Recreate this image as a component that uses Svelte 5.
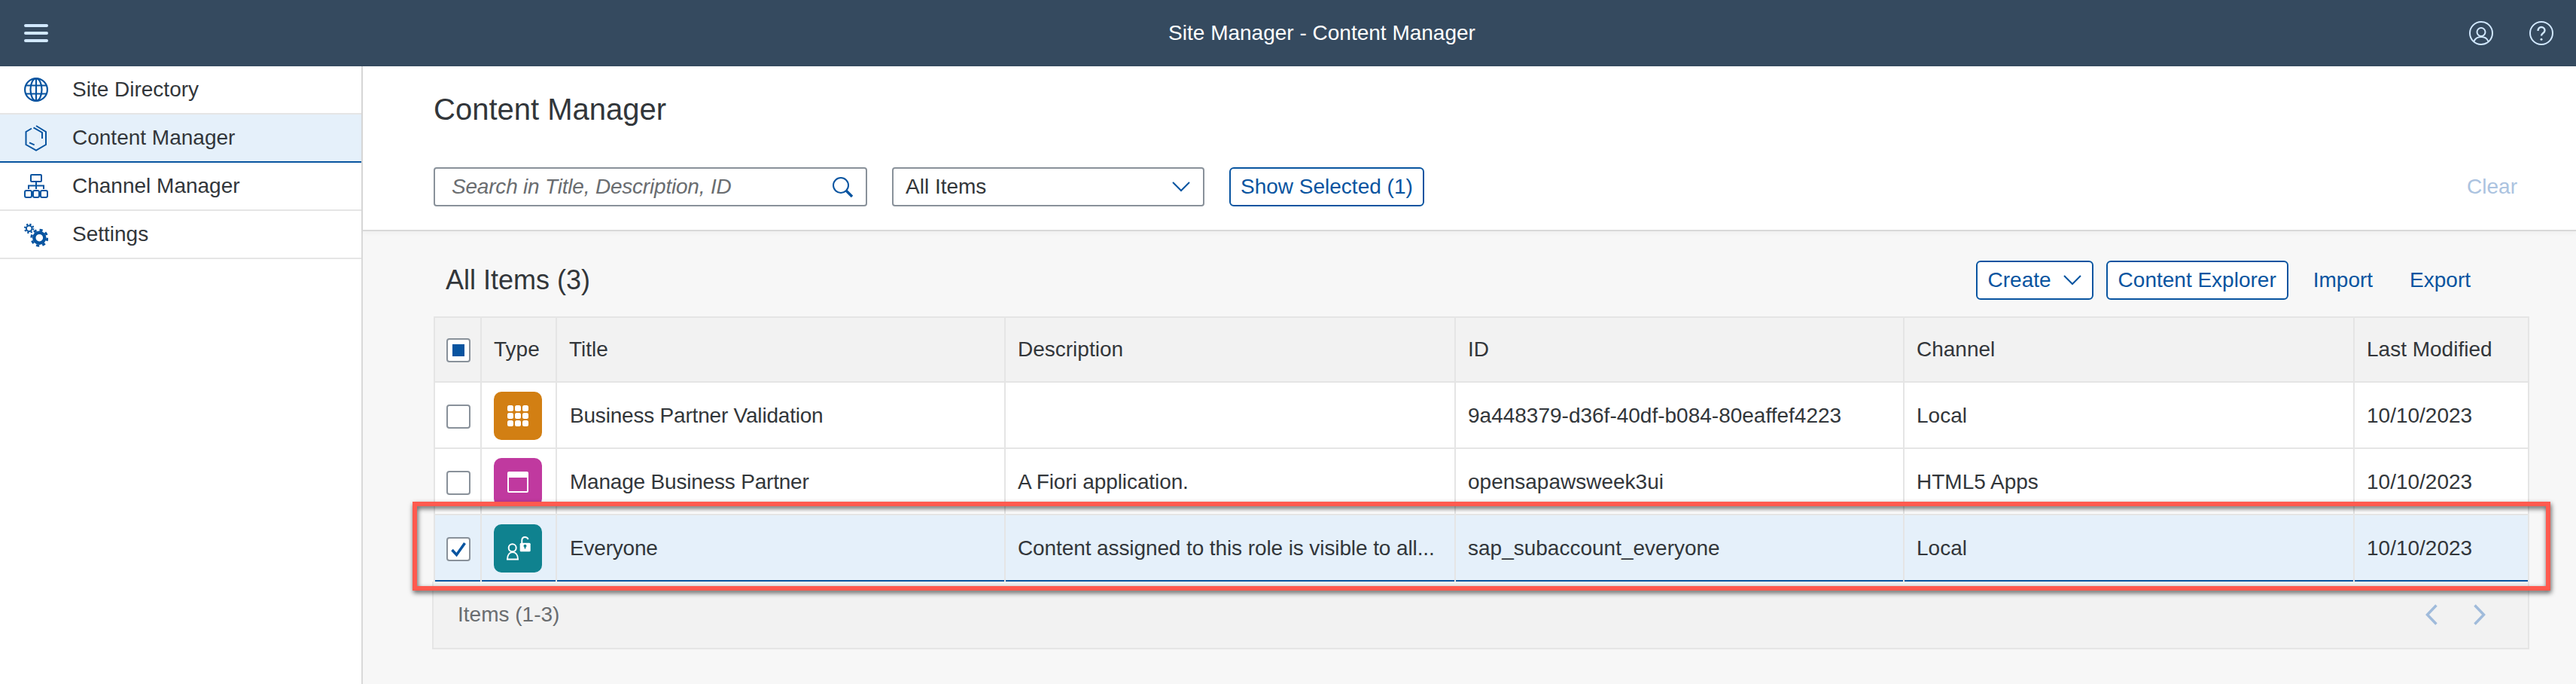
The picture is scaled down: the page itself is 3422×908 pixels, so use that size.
<script>
  const sideItems = [
    { key: "globe", label: "Site Directory" },
    { key: "box", label: "Content Manager", active: true },
    { key: "tree", label: "Channel Manager" },
    { key: "gears", label: "Settings" },
  ];

  const columns = ["Type", "Title", "Description", "ID", "Channel", "Last Modified"];

  const rows = [
    {
      icon: "grid",
      title: "Business Partner Validation",
      description: "",
      id: "9a448379-d36f-40df-b084-80eaffef4223",
      channel: "Local",
      modified: "10/10/2023",
    },
    {
      icon: "window",
      title: "Manage Business Partner",
      description: "A Fiori application.",
      id: "opensapawsweek3ui",
      channel: "HTML5 Apps",
      modified: "10/10/2023",
    },
    {
      icon: "role",
      title: "Everyone",
      description: "Content assigned to this role is visible to all...",
      id: "sap_subaccount_everyone",
      channel: "Local",
      modified: "10/10/2023",
      selected: true,
    },
  ];
</script>

<div class="shell">
  <header class="topbar">
    <button class="hamburger" aria-label="Menu">
      <span></span><span></span><span></span>
    </button>
    <div class="app-title">Site Manager - Content Manager</div>
    <div class="top-actions">
      <svg width="32" height="32" viewBox="0 0 32 32" fill="none" stroke="#d1e8ff" stroke-width="2">
        <circle cx="16" cy="16" r="15" />
        <circle cx="16" cy="14.5" r="5.5" />
        <path d="M6.5 27c1.5-4 5-6 9.500-6s8 2 9.500 6" />
      </svg>
      <svg width="32" height="32" viewBox="0 0 32 32" fill="none" stroke="#d1e8ff" stroke-width="2">
        <circle cx="16" cy="16" r="15" />
        <path d="M11.5 13c0-3 2-5 4.500-5s4.500 2 4.500 4.500c0 3.500-4.500 3.500-4.500 7" stroke-width="2.400" />
        <circle cx="16" cy="24.300" r="1.500" fill="#d1e8ff" stroke="none" />
      </svg>
    </div>
  </header>

  <div class="body">
    <nav class="sidebar">
      {#each sideItems as item}
        <div class="side-item" class:active={item.active}>
          <span class="side-icon">
            {#if item.key === "globe"}
              <svg width="32" height="36" viewBox="0 0 32 36" fill="none" stroke="#0854a0" stroke-width="2.200">
                <circle cx="16" cy="18" r="14.900" />
                <ellipse cx="16" cy="18" rx="7.500" ry="14.900" />
                <path d="M16 3v30M2.500 12.500h27M2.500 23.500h27" />
              </svg>
            {:else if item.key === "box"}
              <svg width="32" height="36" viewBox="0 0 32 36" fill="none" stroke="#0854a0" stroke-width="2">
                <path d="M10 5.500 2.500 10v17L16 34.500 29 27V10L16 2" />
                <path d="M12.500 4.300 24 11v8M7 24.300l6.700 3" />
              </svg>
            {:else if item.key === "tree"}
              <svg width="32" height="32" viewBox="0 0 32 32" fill="none" stroke="#0854a0" stroke-width="2">
                <rect x="9" y="1" width="14" height="9" rx="1" />
                <path d="M16 10v10M6 20v-4.500h20V20" />
                <rect x="1" y="22" width="9" height="9" rx="2" />
                <rect x="12" y="22" width="8" height="9" rx="2" />
                <rect x="22" y="22" width="9" height="9" rx="2" />
              </svg>
            {:else}
              <svg width="32" height="36" viewBox="0 0 32 36" fill="none" stroke="#0854a0">
                <circle cx="6.700" cy="10.300" r="3.800" stroke-width="2" />
                <circle cx="6.700" cy="10.300" r="5.700" stroke-width="2" stroke-dasharray="2.240 2.240" />
                <circle cx="20.300" cy="22.700" r="7" stroke-width="4.400" />
                <circle cx="20.300" cy="22.700" r="10.500" stroke-width="3" stroke-dasharray="4.120 4.120" />
              </svg>
            {/if}
          </span>
          <span class="side-label">{item.label}</span>
        </div>
      {/each}
    </nav>

    <main class="main">
      <section class="filterbar">
        <h1>Content Manager</h1>
        <div class="filters">
          <div class="search">
            <span class="placeholder">Search in Title, Description, ID</span>
            <svg width="28" height="28" viewBox="0 0 28 28" fill="none" stroke="#0854a0" stroke-width="2">
              <circle cx="12" cy="12" r="10" />
              <path d="M19 19l8 8" stroke-width="3.500" />
            </svg>
          </div>
          <div class="select">
            <span>All Items</span>
            <svg class="chev" width="24" height="14" viewBox="0 0 24 14" fill="none" stroke="#0854a0" stroke-width="2">
              <path d="M1 1l11 11L23 1" />
            </svg>
          </div>
          <button class="btn show-selected">Show Selected (1)</button>
          <button class="link clear">Clear</button>
        </div>
      </section>

      <section class="content">
        <div class="toolbar">
          <h2>All Items (3)</h2>
          <div class="tools">
            <button class="btn create">
              Create
              <svg class="chev" width="24" height="14" viewBox="0 0 24 14" fill="none" stroke="#0854a0" stroke-width="2">
                <path d="M1 1l11 11L23 1" />
              </svg>
            </button>
            <button class="btn">Content Explorer</button>
            <button class="link import">Import</button>
            <button class="link export">Export</button>
          </div>
        </div>

        <div class="table-wrap">
          <table>
            <colgroup>
              <col style="width: 62px" />
              <col style="width: 100px" />
              <col style="width: 596px" />
              <col style="width: 598px" />
              <col style="width: 596px" />
              <col style="width: 598px" />
              <col style="width: 232px" />
            </colgroup>
            <thead>
              <tr>
                <th class="check-cell">
                  <span class="checkbox"><span class="partial"></span></span>
                </th>
                {#each columns as col}
                  <th>{col}</th>
                {/each}
              </tr>
            </thead>
            <tbody>
              {#each rows as row}
                <tr class:selected={row.selected}>
                  <td class="check-cell">
                    <span class="checkbox">
                      {#if row.selected}
                        <svg width="24" height="24" viewBox="0 0 24 24" fill="none" stroke="#0854a0" stroke-width="3.500">
                          <path d="M3.500 13l6 6.500L20.500 4" />
                        </svg>
                      {/if}
                    </span>
                  </td>
                  <td class="type-cell">
                    <span class="type-icon {row.icon}">
                      {#if row.icon === "grid"}
                        <svg width="28" height="28" viewBox="0 0 28 28" fill="#fff">
                          {#each [0, 10, 20] as y}
                            {#each [0, 10, 20] as x}
                              <rect x={x} y={y} width="8" height="8" rx="2.500" />
                            {/each}
                          {/each}
                        </svg>
                      {:else if row.icon === "window"}
                        <svg width="28" height="28" viewBox="0 0 28 28" fill="none">
                          <rect x="1" y="1" width="26" height="26" rx="1" stroke="#fff" stroke-width="2" />
                          <rect x="1" y="1" width="26" height="7" fill="#fff" />
                        </svg>
                      {:else}
                        <svg width="33" height="32" viewBox="0 0 33 32" fill="none" stroke="#fff" stroke-width="2">
                          <circle cx="8.700" cy="15.300" r="5" />
                          <path d="M2 30.500c0-6 3-9.500 7-9.500s7 3.500 7 9.500z" />
                          <path d="M21.300 9.500V5.500c0-3 1.700-4.500 4-4.500s3.700 1 4.300 3" />
                          <rect x="18.700" y="8.700" width="14" height="11.600" rx="1.500" fill="#fff" stroke="none" />
                          <circle cx="25.500" cy="12.700" r="2" fill="#0f828f" stroke="none" />
                          <rect x="24.700" y="13" width="1.600" height="3.500" fill="#0f828f" stroke="none" />
                        </svg>
                      {/if}
                    </span>
                  </td>
                  <td class="title-cell">{row.title}</td>
                  <td class="desc-cell">{row.description}</td>
                  <td>{row.id}</td>
                  <td>{row.channel}</td>
                  <td>{row.modified}</td>
                </tr>
              {/each}
            </tbody>
          </table>
        </div>

        <div class="table-footer">
          <span>Items (1-3)</span>
          <div class="pager">
            <svg width="16" height="28" viewBox="0 0 16 28" fill="none" stroke="#a0bbdb" stroke-width="3.500">
              <path d="M14.500 1.500 2.500 14l12 12.500" />
            </svg>
            <svg width="16" height="28" viewBox="0 0 16 28" fill="none" stroke="#a0bbdb" stroke-width="3.500">
              <path d="M1.500 1.500 13.500 14l-12 12.500" />
            </svg>
          </div>
        </div>
        <div class="callout"></div>
      </section>
    </main>
  </div>
</div>

<style>
  :global(body) {
    margin: 0;
    background: #f7f7f7;
    font-family: "Liberation Sans", Arial, sans-serif;
    color: #32363a;
  }
  button {
    font-family: inherit;
    margin: 0;
    background: none;
    cursor: pointer;
  }
  .shell {
    width: 3422px;
    height: 908px;
    overflow: hidden;
    display: flex;
    flex-direction: column;
    font-size: 28px;
  }
  .topbar {
    height: 88px;
    flex: none;
    background: #354a5f;
    display: grid;
    grid-template-columns: 1fr auto 1fr;
    align-items: center;
    padding: 0 30px 0 32px;
  }
  .hamburger {
    border: 0;
    padding: 0;
    width: 32px;
    height: 24px;
    display: flex;
    flex-direction: column;
    justify-content: space-between;
  }
  .hamburger span {
    height: 4px;
    width: 100%;
    background: #d1e8ff;
    border-radius: 2px;
  }
  .app-title {
    color: #fff;
    margin-left: 88px;
  }
  .top-actions {
    display: flex;
    justify-content: flex-end;
    gap: 48px;
  }
  .body {
    flex: 1;
    display: flex;
    min-height: 0;
  }
  .sidebar {
    width: 480px;
    flex: none;
    background: #fff;
    border-right: 2px solid #d9d9d9;
  }
  .side-item {
    height: 62px;
    display: flex;
    align-items: center;
    padding-left: 32px;
    border-bottom: 2px solid #e5e5e5;
  }
  .side-item.active {
    background: #e5f0fa;
    border-bottom-color: #0854a0;
  }
  .side-icon {
    width: 32px;
    height: 36px;
    display: flex;
    align-items: center;
    margin-right: 32px;
  }
  .main {
    flex: 1;
    min-width: 0;
    display: flex;
    flex-direction: column;
  }
  .filterbar {
    height: 219px;
    flex: none;
    box-sizing: border-box;
    background: #fff;
    border-bottom: 2px solid #d9d9d9;
    box-shadow: 0 2px 6px rgba(0, 0, 0, 0.04);
    padding: 34px 78px 0 94px;
  }
  h1 {
    margin: 0 0 54px;
    font-size: 40px;
    font-weight: 400;
    line-height: 46px;
  }
  .filters {
    display: flex;
    align-items: center;
  }
  .search,
  .select {
    box-sizing: border-box;
    height: 52px;
    display: flex;
    align-items: center;
    justify-content: space-between;
    background: #fff;
    border: 2px solid #89919a;
    border-radius: 4px;
  }
  .search {
    width: 576px;
    padding: 0 17px 0 22px;
    margin-right: 33px;
  }
  .placeholder {
    font-style: italic;
    color: #6a6d70;
    letter-spacing: -0.2px;
  }
  .select {
    width: 415px;
    padding: 0 17px 0 16px;
    margin-right: 33px;
  }
  .btn {
    box-sizing: border-box;
    height: 52px;
    padding: 0 14px;
    border: 2px solid #0854a0;
    border-radius: 6px;
    background: #fff;
    color: #0854a0;
    font-size: 28px;
    white-space: nowrap;
  }
  .show-selected {
    padding: 0 13px;
  }
  .link {
    border: 0;
    padding: 0;
    color: #0854a0;
    font-size: 28px;
  }
  .clear {
    margin-left: auto;
    color: #abc3e0;
  }
  .content {
    position: relative;
    flex: 1;
    padding: 0 62px 0 94px;
  }
  .toolbar {
    box-sizing: border-box;
    height: 113px;
    display: flex;
    align-items: center;
    justify-content: space-between;
    padding: 16px 78px 0 16px;
  }
  h2 {
    margin: 0;
    font-size: 36px;
    font-weight: 400;
  }
  .tools {
    display: flex;
    align-items: center;
    gap: 17px;
  }
  .create {
    display: flex;
    align-items: center;
    gap: 16px;
  }
  .import {
    margin-left: 16px;
    margin-right: 32px;
  }
  table {
    table-layout: fixed;
    border-collapse: separate;
    border-spacing: 0;
    width: 2782px;
    font-size: 28px;
  }
  .table-wrap {
    width: 2784px;
    box-sizing: border-box;
    border-top: 2px solid #e5e5e5;
    border-left: 2px solid #e5e5e5;
  }
  th,
  td {
    box-sizing: border-box;
    padding: 0 0 0 16px;
    border-right: 2px solid #e5e5e5;
    border-bottom: 2px solid #e5e5e5;
    text-align: left;
    font-weight: 400;
    white-space: nowrap;
    overflow: hidden;
  }
  th {
    height: 86px;
    background: #f2f2f2;
  }
  td {
    height: 88px;
    padding-top: 2px;
    background: #fff;
  }
  .title-cell {
    padding-left: 17px;
    letter-spacing: -0.2px;
  }
  .desc-cell {
    letter-spacing: -0.1px;
  }
  .selected td {
    background: #e5f0fa;
    border-bottom: 0;
    padding-bottom: 2px;
    box-shadow: inset 0 -2px 0 #0854a0;
  }
  .check-cell,
  .selected .check-cell {
    padding-left: 2px;
    text-align: center;
  }
  .checkbox {
    box-sizing: border-box;
    width: 32px;
    height: 32px;
    background: #fff;
    border: 2px solid #89919a;
    border-radius: 4px;
    display: inline-flex;
    align-items: center;
    justify-content: center;
    vertical-align: middle;
  }
  .partial {
    width: 16px;
    height: 16px;
    background: #0854a0;
  }
  .type-icon {
    width: 64px;
    height: 64px;
    border-radius: 10px;
    display: flex;
    align-items: center;
    justify-content: center;
  }
  .type-icon.grid {
    background: #d27f13;
  }
  .type-icon.window {
    background: #c0399f;
  }
  .type-icon.role {
    background: #0f828f;
  }
  .table-footer {
    box-sizing: border-box;
    width: 2786px;
    height: 90px;
    margin-left: -2px;
    background: #f2f2f2;
    border: 2px solid #e5e5e5;
    border-top: 0;
    display: flex;
    align-items: center;
    justify-content: space-between;
    padding: 0 56px 0 32px;
    color: #6a6d70;
  }
  .pager {
    display: flex;
    gap: 48px;
  }
  /* annotation drawn on top of the screenshot */
  .callout {
    position: absolute;
    left: 66px;
    top: 359px;
    width: 2840px;
    height: 118px;
    box-sizing: border-box;
    border: 6px solid #ff5a4f;
    filter: drop-shadow(1px 3px 3px rgba(0, 0, 0, 0.65));
    pointer-events: none;
  }
</style>
